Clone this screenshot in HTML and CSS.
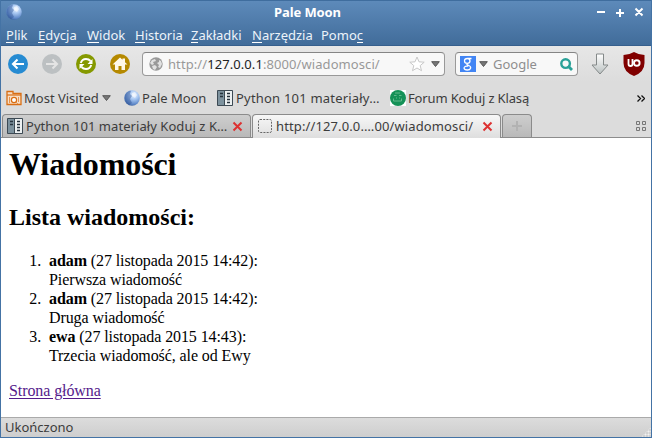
FILE: index.html
```html
<!DOCTYPE html>
<html lang="pl">
<head>
<meta charset="utf-8">
<title>Pale Moon</title>
<link rel="stylesheet" href="styles.css">
</head>
<body>
<svg width="0" height="0" class="defs" aria-hidden="true">
  <defs>
    <radialGradient id="moonFill" cx=".62" cy=".3" r=".8"><stop offset="0" stop-color="#f0f6ff"/><stop offset=".35" stop-color="#a9c8f2"/><stop offset=".75" stop-color="#5e88c8"/><stop offset="1" stop-color="#2c4f8c"/></radialGradient>
    <linearGradient id="arrowFill" x2="0" y2="1"><stop offset="0" stop-color="#fff"/><stop offset="1" stop-color="#b9c0c0"/></linearGradient>
    <symbol id="moon" viewBox="0 0 16 16"><circle cx="8" cy="8" r="7.8" fill="url(#moonFill)"/><path d="M1 5Q3 1 7 .8L6 4 8 6 6 9 8 13 5 15Q0 12 1 5" fill="#274c8c" opacity=".4"/><path d="M8 3l3-1 2 3-2 3-3-2z" fill="#fff" opacity=".5"/></symbol>
    <symbol id="book" viewBox="0 0 16 16"><path d="M.5.5h15v15H.5z" fill="#7d929e" stroke="#3d4a54"/><path d="M8 1h7v14H8z" fill="#edf1f2"/><path d="M7.5 1v14" stroke="#3d4a54"/><path d="M3 3.500h3M3 6.500h3" stroke="#26333d" stroke-width="1.500"/><path d="M10 3.500h3M10 6.500h3M10 9.500h3M10 12.500h3" stroke="#26333d" stroke-width="1.500"/></symbol>
    <symbol id="close" viewBox="0 0 11 11"><path d="M1.500 1.500l8 8M9.500 1.500l-8 8" stroke="#dd3131" stroke-width="2"/></symbol>
    <symbol id="down" viewBox="0 0 9 6"><path d="M.7.7h7.600L4.500 5.500z" fill="#777" stroke="#555"/></symbol>
  </defs>
</svg>
<div class="window">
  <header class="top">
    <div class="titlebar">
      <svg class="i16 app"><use href="#moon"/></svg>
      <div class="title">Pale Moon</div>
      <svg class="controls" width="50" height="12" viewBox="0 0 50 12"><path d="M0 5h8M19 6h8M23 2v8M38.500 1.500l7 7M45.500 1.500l-7 7" stroke="#fff" stroke-width="2"/></svg>
    </div>
    <nav class="menu">
      <span class="m1"><u>P</u>lik</span><span class="m2"><u>E</u>dycja</span><span class="m3"><u>W</u>idok</span><span class="m4"><u>H</u>istoria</span><span class="m5"><u>Z</u>akładki</span><span class="m6"><u>N</u>arzędzia</span><span class="m7">Pomo<u>c</u></span>
    </nav>
  </header>
  <div class="nav">
    <svg class="round" viewBox="0 0 20 20"><circle cx="10" cy="10" r="10" fill="#268bd2"/><path d="M16 10H5M9.500 5.500L5 10l4.500 4.500" fill="none" stroke="#fff" stroke-width="2.100"/></svg>
    <svg class="round" viewBox="0 0 20 20"><circle cx="10" cy="10" r="10" fill="#bcc0c2"/><path d="M4 10h11M10.500 5.500L15 10l-4.500 4.500" fill="none" stroke="#e4e4e4" stroke-width="2.100"/></svg>
    <svg class="round" viewBox="0 0 20 20"><circle cx="10" cy="10" r="10" fill="#859900"/><path d="M4.800 9Q6 5 10 5q2.800 0 4.500 2M15.200 11Q14 15 10 15q-2.800 0-4.500-2" fill="none" stroke="#fff" stroke-width="2"/><path d="M16.500 5v5h-5zM3.500 15v-5h5z" fill="#fff"/></svg>
    <svg class="round" viewBox="0 0 20 20"><circle cx="10" cy="10" r="10" fill="#b58900"/><path d="M2.500 10.500L10 3.500l2.500 2.300V4.500H15v3.700l2.500 2.300H15V16h-3.500v-4h-3v4H5v-5.500z" fill="#fff8e8"/></svg>
    <div class="field url">
      <svg class="globe" viewBox="0 0 14 14"><circle cx="7" cy="7" r="6.700" fill="#999"/><path d="M1 6l2-3 3-1 1 2-3 1 1 2-2 1zM8 6l2-1V3l2 1 1 3-2 4-2-1 1-2zM3 9l3-1 2 2-2 3-2-1z" fill="#e1e1e1"/></svg>
      <span class="address">http://<b>127.0.0.1</b>:8000/wiadomosci/</span>
      <svg class="star" viewBox="0 0 16 16"><path d="M8 1l2 4.800 5.200.4-4 3.400 1.300 5.100L8 12l-4.500 2.700 1.300-5.100-4-3.400L6 5.800z" fill="#fff" stroke="#c8c8c8" stroke-linejoin="round"/></svg>
      <svg class="down"><use href="#down"/></svg>
    </div>
    <div class="field search">
      <span class="g"><svg width="16" height="16" viewBox="0 0 16 16"><path d="M11.500 2.500H7.500C5.500 2.500 4.500 3.700 4.500 5c0 1.500 1.200 2.400 2.700 2.400S10 6.500 10 5 9 2.500 7.500 2.500M7.500 7.500c-1.500 1 0 1.500 1.300 2 3 1.200 2.200 4.500-1.500 4.500-4 0-4.500-3.500-.5-3.900h1.500" fill="none" stroke="#fff" stroke-width="1.300"/></svg></span>
      <svg class="down"><use href="#down"/></svg>
      <span class="hint">Google</span>
      <svg class="lens" viewBox="0 0 13 13"><circle cx="5.600" cy="5.600" r="4.300" fill="none" stroke="#2aa198" stroke-width="2.400"/><path d="M8 8l4 4" stroke="#2aa198" stroke-width="2.800"/></svg>
    </div>
    <svg class="download" viewBox="0 0 18 22"><path d="M5.500 1h7v11H17l-8 9-8-9h4.500z" fill="url(#arrowFill)" stroke="#848989" stroke-linejoin="round"/></svg>
    <svg class="shield" viewBox="0 0 22 24"><path d="M11 0q5 3 10.500 3v8q0 9-10.500 13Q.5 20 .5 11V3Q6 3 11 0z" fill="#800000"/><path d="M5.500 7v5q0 2 2 2t2-2V7" fill="none" stroke="#fff" stroke-width="1.800"/><circle cx="13.800" cy="11" r="2.800" fill="none" stroke="#fff" stroke-width="1.900"/></svg>
  </div>
  <div class="bookmarks">
    <svg class="i16 folder" viewBox="0 0 16 16"><path d="M1 14.500V1.500h6v2h8v11z" fill="#f7dfc8" stroke="#d96e13" stroke-width="1.300"/><path d="M1 5h14" stroke="#d96e13" stroke-width="1.200"/><circle cx="8" cy="10" r="2.600" fill="#fff" stroke="#d96e13" stroke-width="1.200"/><path d="M10 12l2 2M3.500 7v6M12.500 7v5" stroke="#e59450"/></svg>
    <span class="b1">Most Visited</span><svg class="down more"><use href="#down"/></svg>
    <svg class="i16"><use href="#moon"/></svg><span class="b2">Pale Moon</span>
    <svg class="i16"><use href="#book"/></svg><span class="b3">Python 101 materiały…</span>
    <svg class="i16" viewBox="0 0 16 16"><path d="M0 0h16v16H0z" fill="#fff"/><circle cx="8" cy="8" r="8" fill="#159157"/><path d="M4 5.500h2.500M9 5.500h2.500M3.500 8.500v2.500h8V8.500M6 8h1M9 8h1M5 3h5" fill="none" stroke="#62b98c"/></svg><span class="b4">Forum Koduj z Klasą</span>
    <svg class="chev" width="8" height="7" viewBox="0 0 8 7"><path d="M.5.5l3 3-3 3M4.500.5l3 3-3 3" fill="none" stroke="#111" stroke-width="1.300"/></svg>
  </div>
  <div class="tabs">
    <div class="tab first"><svg class="i16"><use href="#book"/></svg><span class="t1">Python 101 materiały Koduj z K…</span><svg class="close"><use href="#close"/></svg></div>
    <div class="tab active"><svg class="blank" viewBox="0 0 14 14"><rect x=".5" y=".5" width="13" height="13" rx="1.500" fill="none" stroke="#666" stroke-dasharray="2 1.200"/></svg><span class="t2">http://127.0.0.…00/wiadomosci/</span><svg class="close"><use href="#close"/></svg></div>
    <div class="tab add"><svg width="10" height="10"><path d="M5 0v10M0 5h10" stroke="#b2b2b2" stroke-width="2"/></svg></div>
    <svg class="grid" width="11" height="11" viewBox="0 0 11 11"><path d="M.5.5h3v3h-3zM6.500.5h3v3h-3zM.5 6.500h3v3h-3zM6.500 6.500h3v3h-3z" fill="none" stroke="#777"/></svg>
  </div>
  <main>
    <h1>Wiadomości</h1>
    <h2>Lista wiadomości:</h2>
    <ol>
      <li><strong>adam</strong> (27 listopada 2015 14:42):<br>Pierwsza wiadomość</li>
      <li><strong>adam</strong> (27 listopada 2015 14:42):<br>Druga wiadomość</li>
      <li><strong>ewa</strong> (27 listopada 2015 14:43):<br>Trzecia wiadomość, ale od Ewy</li>
    </ol>
    <a href="#">Strona główna</a>
  </main>
  <footer><span>Ukończono</span><i class="grip"></i></footer>
</div>
</body>
</html>
```
FILE: styles.css
```css
@counter-style spaced-decimal { system: extends decimal; suffix: ".\2002"; }
* { box-sizing: border-box; }
body { margin: 0; overflow: hidden; font: 13px/18px "Noto Sans", sans-serif; color: #3c3c3c; }
svg { display: block; flex: none; }
.defs { position: absolute; }
span { white-space: nowrap; flex: none; }
.window { width: 652px; height: 438px; display: flex; flex-direction: column; border: solid #4473a5; border-width: 0 1px 1px; background: #dcdcdc; }
.top { height: 46px; background: linear-gradient(#5d8aba, #416c9a); border-top: 1px solid #3f6d9e; border-bottom: 1px solid #365f8d; color: #fff; flex: none; }
.titlebar { display: flex; height: 22px; align-items: center; padding-left: 5px; }
.i16 { width: 16px; height: 16px; }
.title { flex: 1; padding-right: 8px; margin-right: -4px; text-align: center; font-weight: bold; letter-spacing: -.1px; }
.controls { margin: 2px 4px 0 0; }
.menu { display: flex; gap: 10px; padding: 3px 0 0 5px; }
.menu span { color: #edf3fa; }
.menu u { text-decoration: none; display: inline-block; height: 17px; border-bottom: 1px solid #fff; line-height: 18px; vertical-align: top; }
.m1 { width: 22px; } .m2 { width: 39px; } .m3 { width: 38px; } .m4 { width: 46px; } .m5 { width: 51px; } .m6 { width: 59px; } .m7 { width: 41px; }
.nav { height: 36px; display: flex; align-items: center; padding-left: 7px; background: linear-gradient(#e7e7e7, #dcdcdc); flex: none; }
.round { width: 20px; height: 20px; margin-right: 14px; }
.field { height: 24px; border: 1px solid #999; border-top-color: #858585; border-radius: 4px; background: #f8f8f8; display: flex; align-items: center; }
.url { width: 303px; margin-left: -2px; padding-left: 6px; }
.globe { width: 14px; height: 14px; }
.address { width: 246px; padding-left: 5px; color: #999; letter-spacing: .08px; }
.address b { font-weight: normal; color: #222; }
.star { width: 16px; height: 16px; }
.down { width: 9px; height: 6px; }
.url .down { margin-left: 6px; }
.search { width: 123px; margin-left: 10px; padding-left: 4px; }
.g { width: 16px; height: 16px; background: #4285f4; }
.search .down { margin-left: 3px; }
.hint { width: 72px; padding-left: 5px; color: #8e8e8e; }
.lens { width: 13px; height: 13px; }
.download { width: 18px; height: 22px; margin-left: 13px; }
.shield { width: 22px; height: 24px; margin-left: 14px; }
.bookmarks { height: 32px; display: flex; align-items: center; padding-left: 5px; flex: none; }
.folder { margin-right: 2px; }
.b1 { width: 78px; } .more { margin-right: 13px; } .b2 { width: 77px; padding-left: 2px; letter-spacing: -.05px; } .b3 { width: 157px; padding-left: 3px; letter-spacing: .2px; } .b4 { padding-left: 2px; width: 231px; letter-spacing: -.15px; }
.tabs { height: 24px; display: flex; border-bottom: 1px solid #8c8c8c; gap: 1px; flex: none; padding-left: 1px; }
.tab { display: flex; align-items: center; border: 1px solid #8b8b8b; border-bottom: 0; border-radius: 4px 4px 0 0; background: linear-gradient(#cecece, #b9b9b9); height: 24px; }
.first { width: 249px; padding-left: 4px; height: 23px; }
.active { width: 249px; background: linear-gradient(#f7f7f7, #dedede); padding: 0 0 1px 5px; }
.add { width: 30px; height: 23px; justify-content: center; }
.t1 { width: 209px; padding-left: 3px; letter-spacing: .06px; } .t2 { width: 208px; padding-left: 4px; letter-spacing: .12px; }
.blank { width: 14px; height: 14px; }
.close { width: 11px; height: 11px; }
.active .close { margin-left: 2px; }
.grid { margin: 7px 4px 0 auto; }
main { height: 279px; background: #fff; color: #000; padding: 8px; font: 16px/19px "Liberation Serif", serif; letter-spacing: -.09px; flex: none; }
h1 { margin: 0; font-size: 32px; line-height: 37px; }
h2 { margin: 21px 0 20px; font-size: 24px; line-height: 27px; letter-spacing: 0; }
ol { margin: 0 0 16px; padding-left: 40px; list-style: spaced-decimal; }
a { color: #551a8b; text-underline-offset: 2px; }
footer { flex: 1; border-top: 1px solid #aaa; background: linear-gradient(#dcdcdc, #cecece); padding-left: 4px; display: flex; justify-content: space-between; }
.grip { width: 10px; height: 10px; align-self: flex-end; background: radial-gradient(circle, #f2f2f2 .8px, transparent 1.200px) 0 0 / 3px 3px; clip-path: polygon(100% 0, 100% 100%, 0 100%); }
```
